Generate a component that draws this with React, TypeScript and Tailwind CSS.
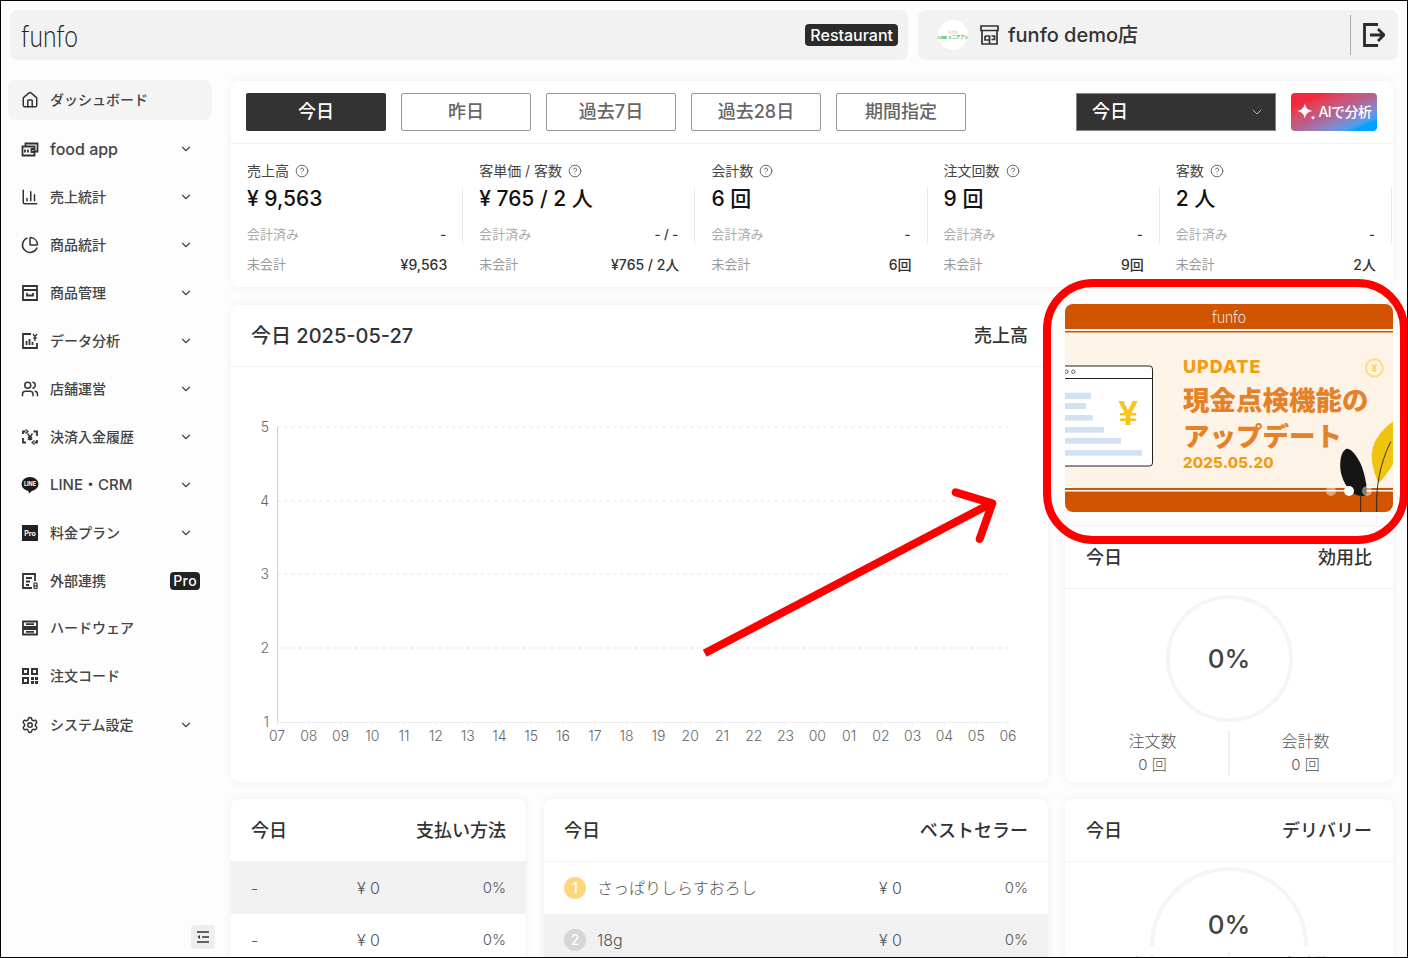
import type { ReactNode } from "react";
import { ChartColumn, ChartPie, ChevronDown, CircleHelp, House, Settings, Users } from "lucide-react";

const hours = ["07", "08", "09", "10", "11", "12", "13", "14", "15", "16", "17", "18", "19", "20", "21", "22", "23", "00", "01", "02", "03", "04", "05", "06"];

const Svg = ({ children, size = 18 }: { children: ReactNode; size?: number }) => (
  <svg width={size} height={size} viewBox="0 0 18 18" fill="none" stroke="#333" strokeWidth="1.8">
    {children}
  </svg>
);

const FoodIcon = () => (
  <Svg>
    <path d="M1.5 6.500h12v9h-12z" />
    <path d="M4.500 6.500V3.500h12v8h-3" />
    <path d="M4 9.500v3M7 9.500v3M13.500 9h-3v3h3" />
  </Svg>
);
const BoxIcon = () => (
  <Svg>
    <path d="M2 2h14v14H2zM2 6h14" />
    <path d="M6 9v2.500h6V9" />
  </Svg>
);
const DataIcon = () => (
  <Svg>
    <path d="M10 2H2v14h14v-5" />
    <path d="M5.500 13V9M8.500 13V7M11.500 13v-3" />
    <path d="M12 2l2 2.500L16 2M14 4.500V9M12.300 6h3.400" strokeWidth="1.300" />
  </Svg>
);
const PayIcon = () => (
  <Svg>
    <path d="M2 6V3.500h2.500M12.500 3.500H16V8M16 12v2.500h-2.500M5 14.500H2V10" />
    <path d="M4.500 1.500L7 3.500 4.500 5.500M13.500 12.500L11 14.500l2.500 2" strokeWidth="1.200" />
    <path d="M6.500 5.500L9 9l2.500-3.500M9 9v3.500M6.800 9.500h4.400M6.800 11.300h4.400" strokeWidth="1.400" />
  </Svg>
);
const LineIcon = () => (
  <svg width="18" height="18" viewBox="0 0 18 18">
    <ellipse cx="9" cy="8" rx="8.500" ry="7" fill="#1a1a1a" />
    <path d="M7 14l1 3.500 4-3.500z" fill="#1a1a1a" />
    <text x="9" y="10" textAnchor="middle" fontSize="5.500" fontWeight="700" fill="#fff">LINE</text>
  </svg>
);
const ProIcon = () => (
  <span className="flex h-4 w-4 items-center justify-center bg-[#222] text-[7px] font-bold leading-none text-white">Pro</span>
);
const LinkIcon = () => (
  <Svg>
    <path d="M11 16H2V2h12v7" />
    <path d="M5 6h6M5 9.500h4M5 13h3" />
    <path d="M13 11v5.500M16 11v5.500M13 11h3M13 13.800h3M13 16.500h3" strokeWidth="1.200" />
  </Svg>
);
const HardwareIcon = () => (
  <Svg>
    <path d="M2 2.500h14v5.500H2zM2 10h14v5.500H2z" />
    <path d="M5 5.200h8M5 12.800h8" />
  </Svg>
);
const QrIcon = () => (
  <svg width="18" height="18" viewBox="0 0 18 18" fill="#333">
    <path fillRule="evenodd" d="M1 1h7v7H1zM3 3v3h3V3zM10 1h7v7h-7zM12 3v3h3V3zM1 10h7v7H1zM3 12v3h3v-3z" />
    <path d="M10 10h3v3h-3zM14 10h3v3h-3zM10 14h3v3h-3zM14 14h3v3h-3z" />
  </svg>
);

const navItems: { label: string; icon: ReactNode; chevron?: boolean; pro?: boolean; row?: string; text?: string }[] = [
  { label: "food app", icon: <FoodIcon />, chevron: true, text: "text-base" },
  { label: "売上統計", icon: <ChartColumn size={18} color="#333" />, chevron: true },
  { label: "商品統計", icon: <ChartPie size={18} color="#333" />, chevron: true },
  { label: "商品管理", icon: <BoxIcon />, chevron: true },
  { label: "データ分析", icon: <DataIcon />, chevron: true },
  { label: "店舗運営", icon: <Users size={18} color="#333" />, chevron: true },
  { label: "決済入金履歴", icon: <PayIcon />, chevron: true },
  { label: "LINE・CRM", icon: <LineIcon />, chevron: true, text: "text-[15px]" },
  { label: "料金プラン", icon: <ProIcon />, chevron: true },
  { label: "外部連携", icon: <LinkIcon />, pro: true, row: "h-[47px]" },
  { label: "ハードウェア", icon: <HardwareIcon /> },
  { label: "注文コード", icon: <QrIcon /> },
  { label: "システム設定", icon: <Settings size={18} color="#333" />, chevron: true, row: "mt-px" },
];

const stats = [
  { label: "売上高", value: "¥ 9,563", paid: "-", unpaid: "¥9,563" },
  { label: "客単価 / 客数", value: "¥ 765 / 2 人", paid: "- / -", unpaid: "¥765 / 2人" },
  { label: "会計数", value: "6 回", paid: "-", unpaid: "6回" },
  { label: "注文回数", value: "9 回", paid: "-", unpaid: "9回" },
  { label: "客数", value: "2 人", paid: "-", unpaid: "2人" },
];

const Card = ({ className, children }: { className: string; children: ReactNode }) => (
  <section className={`shrink-0 overflow-hidden rounded-lg bg-white shadow-[0_0_10px_rgba(0,0,0,0.06)] ${className}`}>{children}</section>
);

const CardHead = ({ left, right, wide }: { left: string; right: string; wide?: boolean }) => (
  <div className={`flex h-[62px] items-center justify-between border-b border-[#f2f2f2] text-lg font-medium text-[#333] ${wide ? "px-[21px]" : "px-5"}`}>
    <span>{left}</span>
    <span>{right}</span>
  </div>
);

const TableRow = ({ name, badge, gray }: { name: string; badge?: ReactNode; gray?: boolean }) => (
  <div className={`flex h-[52px] items-center px-5 text-base font-light text-[#555] ${gray ? "bg-[#f1f1f1]" : "bg-white"}`}>
    {badge}
    <span className="flex-1">{name}</span>
    <span>¥ 0</span>
    <span className="w-[126px] text-right text-[15px]">0%</span>
  </div>
);

const Badge = ({ n, color }: { n: number; color: string }) => (
  <span className={`mr-[11px] flex h-[22px] w-[22px] items-center justify-center rounded-full text-sm font-medium text-white ${color}`}>{n}</span>
);

function Chart() {
  const lines = [
    { label: "5", y: 60 },
    { label: "4", y: 134 },
    { label: "3", y: 207 },
    { label: "2", y: 281 },
  ];
  return (
    <svg className="block" width="817" height="415" viewBox="0 0 817 415">
      {lines.map((l) => (
        <g key={l.label}>
          <line x1="46" x2="777" y1={l.y} y2={l.y} stroke="#e2e7f2" strokeDasharray="4 3" />
          <text x="38" y={l.y + 5} textAnchor="end" fontSize="14" fill="#666" fontWeight="300">{l.label}</text>
        </g>
      ))}
      <text x="38" y="360" textAnchor="end" fontSize="14" fill="#666" fontWeight="300">1</text>
      <line x1="46.5" x2="46.5" y1="60" y2="355" stroke="#ccc" />
      <line x1="46" x2="777" y1="355.5" y2="355.5" stroke="#eee" />
      {hours.map((h, i) => {
        const x = 46 + (i * 731) / 23;
        return (
          <g key={h}>
            <line x1={x} x2={x} y1="355" y2="360" stroke="#eee" />
            <text x={x} y="374" textAnchor="middle" fontSize="14" fill="#666" fontWeight="300">{h}</text>
          </g>
        );
      })}
    </svg>
  );
}

function Banner() {
  return (
    <svg className="block shrink-0 rounded-lg" width="328" height="208" viewBox="0 0 328 208">
      <rect width="328" height="208" fill="#d15400" />
      <rect y="25" width="328" height="2" fill="#fff" />
      <rect y="28.500" width="328" height="155.500" fill="#fdf3e7" />
      <rect y="186" width="328" height="1.500" fill="#fff" />
      <text x="164" y="19" textAnchor="middle" fontSize="18" fontFamily="Lato" fontWeight="300" fill="#fff" textLength="34" lengthAdjust="spacingAndGlyphs">funfo</text>
      <rect x="-10" y="62" width="97.500" height="100" rx="3" fill="#fff" stroke="#222" />
      <line x1="0" x2="87" y1="74.500" y2="74.500" stroke="#222" />
      <circle cx="1.500" cy="67.700" r="1.700" fill="#fff" stroke="#222" strokeWidth="0.700" />
      <circle cx="8.300" cy="67.700" r="1.700" fill="#fff" stroke="#222" strokeWidth="0.700" />
      <g fill="#d3e2f3">
        <rect y="88.700" width="26" height="6.300" />
        <rect y="99" width="21" height="6" />
        <rect y="111" width="27.700" height="5.700" />
        <rect y="123" width="39" height="5.700" />
        <rect y="134" width="56" height="5.700" />
        <rect y="146" width="77" height="5.700" />
      </g>
      <text x="63.300" y="121" textAnchor="middle" fontSize="35" fontWeight="700" fontFamily="Liberation Sans" fill="#fbc515">¥</text>
      <text x="118" y="68.500" fontSize="18" fontWeight="800" fill="#f39c12" letterSpacing="1">UPDATE</text>
      <text x="118" y="106" fontSize="26.500" fontWeight="900" fill="#e58128">現金点検機能の</text>
      <text x="118" y="142" fontSize="26.500" fontWeight="900" fill="#e58128">アップデート</text>
      <text x="118" y="163.700" fontSize="15" fontWeight="800" fill="#f39c12" letterSpacing="0.200">2025.05.20</text>
      <circle cx="309.300" cy="64" r="8.500" fill="none" stroke="#fbdc85" strokeWidth="2" />
      <text x="309.300" y="68" textAnchor="middle" fontSize="10" fill="#f7cf6a" fontWeight="700">¥</text>
      <path d="M328 117.700C315 126 306 140 306.700 153c.6 11 4 20 7 26.300C320 173 325 165 328 160z" fill="#f0c30f" />
      <path d="M311.700 208c-.5-12 .3-25 2.300-35 2-11 6-24 11.700-35.300" fill="none" stroke="#222" strokeWidth="0.900" />
      <path d="M281 145c-5 3-6.500 12-5.500 21 1 9 7 19 12 23 4 3 12 4 13.500 2 2-4-.500-18-4-28-3-8-11-20-16-18z" fill="#151515" />
      <path d="M295.700 190v18" stroke="#222" strokeWidth="0.900" />
      <circle cx="266" cy="187" r="5" fill="#fff" fillOpacity="0.450" />
      <circle cx="284" cy="187" r="5" fill="#fff" />
      <circle cx="302" cy="187" r="5" fill="#fff" fillOpacity="0.450" />
    </svg>
  );
}

export default function App() {
  return (
    <div className="relative flex h-[958px] w-[1408px] flex-col overflow-hidden border border-black bg-[#fdfdfd] font-['Inter','Noto_Sans_CJK_JP',sans-serif]">
      <header className="flex shrink-0 gap-[10px] px-[9px] pt-[9px]">
        <div className="flex h-[50px] w-[898px] items-center justify-between rounded-lg bg-[#f2f2f2] pl-[11px] pr-[10px]">
          <span className="origin-left scale-x-[0.77] font-['Lato'] text-[32px] font-light leading-none text-[#222]">funfo</span>
          <span className="rounded bg-[#2b2b2b] px-[5px] text-base font-medium leading-[22px] text-white">Restaurant</span>
        </div>
        <div className="flex h-[50px] flex-1 items-center rounded-lg bg-[#f2f2f2] pl-5 pr-[13px]">
          <span className="flex h-[30px] w-[30px] flex-col items-center justify-center rounded-full bg-white text-[4px] leading-[5px]">
            <span className="text-[#f5b35c]">funfo</span>
            <span className="font-bold text-[#22b84c]">LINE ミニアプリ</span>
          </span>
          <span className="ml-3">
            <svg width="19" height="20" viewBox="0 0 19 20" fill="none" stroke="#333" strokeWidth="1.700">
              <path d="M1 1h17v4.500H1zM2 5.500V19h15V5.500" />
              <path d="M5 11h4.500v8M11.500 11h3v3.500h-3M5 11v4h4.500" />
            </svg>
          </span>
          <span className="ml-[9px] text-xl font-medium text-[#333]">funfo demo店</span>
          <span className="ml-auto h-10 w-px bg-[#aaa]" />
          <span className="ml-3">
            <svg className="block" width="22" height="24" viewBox="0 0 22 24" fill="none" stroke="#2b2b2b" strokeWidth="2.800">
              <path d="M15 1.500H1.500v21H15" />
              <path d="M7 12h14M15 6l6 6-6 6" />
            </svg>
          </span>
        </div>
      </header>

      <div className="flex min-h-0 flex-1 pt-5">
        <aside className="flex w-[230px] shrink-0 flex-col pl-[7px]">
          <div className="flex h-10 w-[204px] items-center rounded-lg bg-[#f4f4f4] pl-[13px] text-sm font-medium text-[#444]">
            <House size={18} color="#333" />
            <span className="ml-[11px]">ダッシュボード</span>
          </div>
          <nav className="mt-[5px] flex w-[204px] flex-col">
            {navItems.map((item) => (
              <div key={item.label} className={`flex items-center pl-[13px] text-sm font-medium text-[#444] ${item.row === "h-[47px]" ? "h-[47px]" : "h-12"} ${item.row === "mt-px" ? "mt-px" : ""}`}>
                <span className="flex w-[18px] items-center justify-center">{item.icon}</span>
                <span className={`ml-[11px] flex-1 ${item.text ?? ""}`}>{item.label}</span>
                {item.chevron && <ChevronDown size={14} color="#444" className="mr-[19px]" />}
                {item.pro && <span className="mr-3 rounded-sm bg-[#222] px-[3px] text-sm leading-[18px] tracking-[0.4px] text-white">Pro</span>}
              </div>
            ))}
          </nav>
          <div className="mb-2 ml-[183px] mt-auto flex h-6 w-6 items-center justify-center rounded-sm bg-[#eee]">
            <svg width="14" height="12" viewBox="0 0 14 12" fill="none" stroke="#333" strokeWidth="1.300">
              <path d="M1 1h12M6 6h7M1 11h12" />
              <path d="M4 4L1.500 6 4 8z" fill="#333" stroke="none" />
            </svg>
          </div>
        </aside>

        <main className="flex min-w-0 flex-1 flex-col pt-px">
          <Card className="h-[206px] w-[1162px]">
            <div className="flex h-[63px] items-center border-b border-[#f2f2f2] pl-[15px] pr-4 text-lg text-[#666]">
              <div className="flex h-[38px] w-[140px] items-center justify-center rounded-[2px] bg-[#333] font-medium text-white">今日</div>
              {["昨日", "過去7日", "過去28日", "期間指定"].map((t) => (
                <div key={t} className="ml-[15px] flex h-[38px] w-[130px] items-center justify-center rounded-[2px] border border-[#999] font-medium">{t}</div>
              ))}
              <div className="ml-auto flex h-[38px] w-[200px] items-center justify-between border border-[#888] bg-[#333] pl-[15px] pr-[10px] font-medium text-white">
                今日
                <ChevronDown size={16} color="#ccc" strokeWidth={1.300} />
              </div>
              <div className="ml-[15px] flex h-[38px] w-[86px] items-center justify-center rounded bg-linear-to-br from-[#f2283f] from-20% via-[#b5608f] via-50% to-[#00a2ff] to-85% text-sm font-medium text-white">
                <svg width="22" height="22" viewBox="0 0 20 20" fill="#fff">
                  <path d="M8 2c.8 4.200 2.300 6 7 7-4.700 1-6.200 2.800-7 7-.8-4.200-2.300-6-7-7 4.700-1 6.200-2.800 7-7z" />
                  <path d="M15.500 13c.3 1.500.8 2 2.500 2.300-1.700.3-2.200.8-2.500 2.300-.3-1.500-.8-2-2.500-2.300 1.700-.3 2.200-.8 2.500-2.300z" />
                </svg>
                <span className="tracking-[-0.5px]">AIで分析</span>
              </div>
            </div>
            <div className="flex pt-[15px]">
              {stats.map((s) => (
                <div key={s.label} className="w-[232.2px] shrink-0 pl-4">
                  <div className="flex h-[23px] items-center gap-[6px] text-sm text-[#444]">
                    {s.label}
                    <CircleHelp size={14} color="#555" strokeWidth={1.500} />
                  </div>
                  <div className="mt-[6px] border-r border-[#e8e8e8] pr-4">
                    <div className="flex h-[22px] items-center text-[21px] font-medium text-[#111]">{s.value}</div>
                    <div className="flex h-[33px] items-center justify-between pt-4 text-[13px] text-[#aaa]">
                      <span>会計済み</span>
                      <span className="font-medium text-[#333]">{s.paid}</span>
                    </div>
                  </div>
                  <div className="flex h-10 items-center justify-between pr-4 pt-1 text-[13px] text-[#999]">
                    <span>未会計</span>
                    <span className="text-sm font-medium text-[#333]">{s.unpaid}</span>
                  </div>
                </div>
              ))}
            </div>
          </Card>

          <div className="mt-[18px] flex h-[477px] shrink-0 gap-[17px]">
            <Card className="h-[477px] w-[817px]">
              <div className="flex h-[62px] items-center justify-between border-b border-[#f2f2f2] px-5 font-medium text-[#333]">
                <span className="text-xl">今日 2025-05-27</span>
                <span className="text-lg">売上高</span>
              </div>
              <Chart />
            </Card>
            <div className="-mt-px flex w-[328px] shrink-0 flex-col gap-[15px]">
              <Banner />
              <Card className="h-[255px] w-[328px]">
                <CardHead left="今日" right="効用比" wide />
                <div className="flex flex-col items-center px-3 pt-[6px]">
                  <div className="flex h-[127px] w-[127px] items-center justify-center rounded-full border-4 border-[#f5f5f5] text-[26px] font-medium text-[#444]">0%</div>
                  <div className="mt-2 flex h-[45px] w-full text-center font-light text-[#555]">
                    <div className="-mt-px flex-1 text-base leading-6">
                      <div>注文数</div>
                      <div className="text-[15px]">0 回</div>
                    </div>
                    <div className="w-[2px] bg-[#f0f0f0]" />
                    <div className="-mt-px flex-1 text-base leading-6">
                      <div>会計数</div>
                      <div className="text-[15px]">0 回</div>
                    </div>
                  </div>
                </div>
              </Card>
            </div>
          </div>

          <div className="mt-[17px] flex gap-[17px]">
            <Card className="h-[200px] w-[295px] pt-px">
              <CardHead left="今日" right="支払い方法" />
              <TableRow name="-" gray />
              <TableRow name="-" />
            </Card>
            <Card className="ml-px h-[200px] w-[504px] pt-px">
              <CardHead left="今日" right="ベストセラー" />
              <TableRow name="さっぱりしらすおろし" badge={<Badge n={1} color="bg-[#fdd77f]" />} />
              <TableRow name="18g" badge={<Badge n={2} color="bg-[#d5d5d5]" />} gray />
            </Card>
            <Card className="h-[200px] w-[328px] pt-px">
              <CardHead left="今日" right="デリバリー" wide />
              <div className="flex flex-col items-center px-3 pt-[5px]">
                <div className="h-[79px] w-[158px] rounded-t-full border-4 border-b-0 border-[#f5f5f5] pt-[36px] text-center text-[26px] font-medium leading-9 text-[#444]">0%</div>
                <div className="mt-[6px] flex w-full text-center text-base font-light leading-6 text-[#555]">
                  <div className="flex-1">売上高</div>
                  <div className="w-[2px] bg-[#f0f0f0]" />
                  <div className="flex-1">会計数</div>
                </div>
              </div>
            </Card>
          </div>
        </main>
      </div>

      {/* annotations drawn over the page */}
      <div className="pointer-events-none absolute left-[1042px] top-[278px] h-[265px] w-[365px] rounded-[50px] border-8 border-[#ff0000]" />
      <svg className="pointer-events-none absolute left-0 top-0" width="1408" height="958" fill="none" stroke="#ff0000" strokeWidth="8">
        <path d="M703.700 652.300L991 502" />
        <path d="M954.700 491.300L991.300 502.300 978.700 538" strokeLinecap="round" strokeLinejoin="round" />
      </svg>
    </div>
  );
}
